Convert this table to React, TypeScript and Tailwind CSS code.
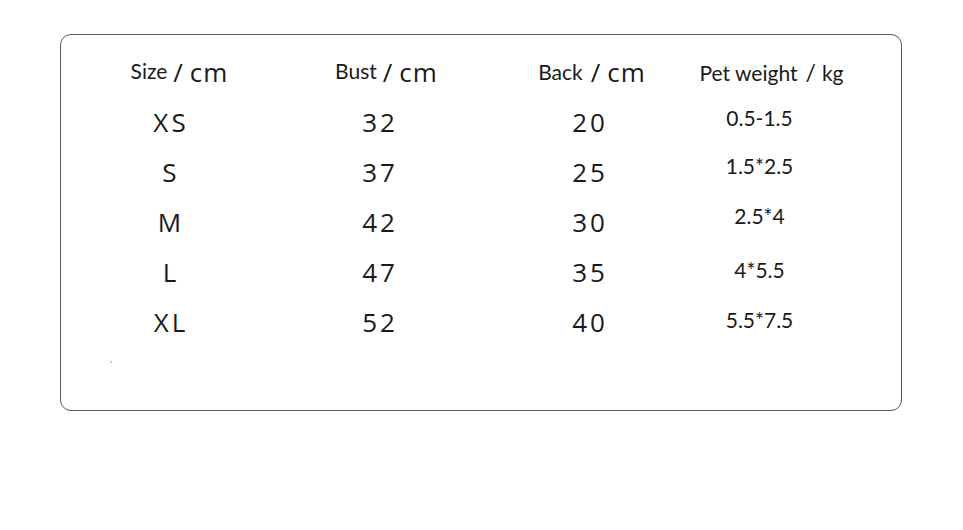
const rows = [
  { size: "XS", bust: "32", back: "20", weight: "0.5-1.5", wOffset: "mt-[-8px]" },
  { size: "S", bust: "37", back: "25", weight: "1.5*2.5", wOffset: "mt-[-12px]" },
  { size: "M", bust: "42", back: "30", weight: "2.5*4", wOffset: "mt-[-12px]" },
  { size: "L", bust: "47", back: "35", weight: "4*5.5", wOffset: "mt-[-4px]" },
  { size: "XL", bust: "52", back: "40", weight: "5.5*7.5", wOffset: "mt-[-4px]" },
];

const label = "font-['Lato','Liberation_Sans',sans-serif] text-[21px] text-[#1a1a1a]";
const unit = "font-['Open_Sans','DejaVu_Sans',sans-serif] text-[26px] font-medium tracking-[1px] text-[#1a1a1a]";
const value = "font-['Open_Sans','DejaVu_Sans',sans-serif] text-[26px] font-medium tracking-[3px] text-[#1a1a1a]";

export default function App() {
  return (
    <div className="h-[530px] w-[963px] bg-white pt-[34px] pl-[60px]">
      <div className="h-[377px] w-[842px] rounded-[11px] border-[1.5px] border-[#5a5a5a]">
        <div className="grid grid-cols-[210px_210px_210px_160px] pl-[4px] pt-[12px]">
          <div className="flex h-[50px] items-center justify-center pl-[19px] leading-none">
            <span className={`${label} mt-[-4px]`}>Size</span>
            <span className={`${unit} ml-[6px] text-[24px]`}>/</span>
            <span className={`${unit} ml-[6px]`}>cm</span>
          </div>
          <div className="flex h-[50px] items-center justify-center pl-[13px] leading-none">
            <span className={`${label} mt-[-4px]`}>Bust</span>
            <span className={`${unit} ml-[6px] text-[24px]`}>/</span>
            <span className={`${unit} ml-[6px]`}>cm</span>
          </div>
          <div className="flex h-[50px] items-center justify-center pl-[4px] leading-none">
            <span className={`${label} mt-[-2px]`}>Back</span>
            <span className={`${unit} ml-[8px] text-[24px]`}>/</span>
            <span className={`${unit} ml-[6px]`}>cm</span>
          </div>
          <div className="flex h-[50px] items-center justify-center pr-[7px] leading-none">
            <span className={label}>Pet weight</span>
            <span className={`${label} ml-[8px] text-[23px]`}>/</span>
            <span className={`${label} ml-[6px]`}>kg</span>
          </div>

          {rows.map((r) => (
            <div key={r.size} className="contents">
              <div className={`${value} flex h-[50px] items-center justify-center pl-[2px]`}>{r.size}</div>
              <div className={`${value} flex h-[50px] items-center justify-center`}>{r.bust}</div>
              <div className={`${value} flex h-[50px] items-center justify-center`}>{r.back}</div>
              <div className={`${label} flex h-[50px] items-center justify-center pr-[31px]`}>
                <span className={r.wOffset}>{r.weight}</span>
              </div>
            </div>
          ))}
        </div>
        <div className="ml-[49px] mt-[14px] h-[2px] w-[2px] rounded-full bg-[#bbb]" />
      </div>
    </div>
  );
}
